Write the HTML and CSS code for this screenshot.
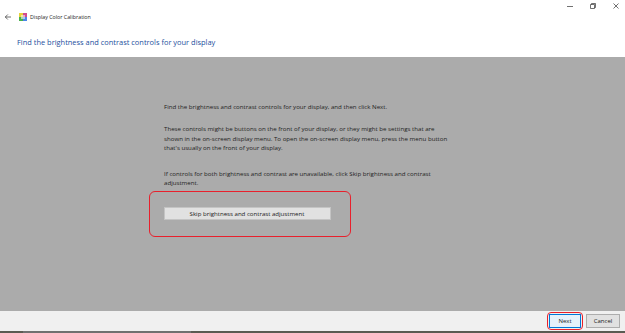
FILE: index.html
```html
<!DOCTYPE html>
<html lang="en">
<head>
    <meta charset="UTF-8">
    <title>Display Color Calibration</title>
    <link rel="stylesheet" href="styles.css">
</head>
<body>
    <div class="window">
        <div class="titlebar">
            <svg class="back" width="8" height="8" viewBox="0 0 8 8"><path d="M7 4H1.3M3.8 1.5L1.3 4l2.5 2.5" stroke="#333" stroke-width="0.7" fill="none"/></svg>
            <svg class="app-icon" width="8" height="8" viewBox="0 0 8 8">
                <rect x="0" y="0" width="8" height="8" fill="#3a6fc4"/>
                <rect x="0" y="0" width="4" height="4" fill="#e8d23a"/>
                <rect x="4" y="0" width="4" height="4" fill="#d14b8f"/>
                <rect x="0" y="4" width="4" height="4" fill="#48b04c"/>
                <rect x="4" y="4" width="4" height="4" fill="#4a86e8"/>
                <rect x="2" y="2" width="4" height="4" fill="#f4f4f4" opacity="0.6"/>
            </svg>
            <span class="app-title">Display Color Calibration</span>
            <div class="win-controls">
                <svg width="8" height="8" viewBox="0 0 8 8"><path d="M1 4.5h6" stroke="#333" stroke-width="0.7"/></svg>
                <svg width="8" height="8" viewBox="0 0 8 8"><path d="M1.5 2.5h4v4h-4z M2.5 2.5v-1h4v4h-1" stroke="#333" stroke-width="0.7" fill="none"/></svg>
                <svg width="8" height="8" viewBox="0 0 8 8"><path d="M1.5 1.5l5 5M6.5 1.5l-5 5" stroke="#333" stroke-width="0.7"/></svg>
            </div>
        </div>
        <div class="header">
            <h1>Find the brightness and contrast controls for your display</h1>
        </div>
        <div class="main">
            <div class="content">
                <p class="first">Find the brightness and contrast controls for your display, and then click Next.</p>
                <p>These controls might be buttons on the front of your display, or they might be settings that are<br>shown in the on-screen display menu. To open the on-screen display menu, press the menu button that's usually on the front of your display.</p>
                <p class="skip-note">If controls for both brightness and contrast are unavailable, click Skip brightness and contrast adjustment.</p>
                <div class="highlight">
                    <button class="btn-skip">Skip brightness and contrast adjustment</button>
                </div>
            </div>
        </div>
        <div class="footer">
            <span class="highlight-small"><button class="btn btn-next">Next</button></span>
            <button class="btn">Cancel</button>
        </div>
        <div class="taskbar"><span class="taskbar-item"></span></div>
    </div>
</body>
</html>
```

FILE: styles.css
```css
body {
    margin: 0;
    font-family: "Open Sans", "Noto Sans", sans-serif;
    background: #fff;
}

.window {
    width: 625px;
    height: 333px;
    display: flex;
    flex-direction: column;
    overflow: hidden;
}

.titlebar {
    height: 34px;
    display: flex;
    align-items: center;
    padding-left: 4px;
    color: #222;
    position: relative;
}

.back {
    margin-right: 7px;
}

.app-icon {
    margin-right: 3px;
}

.app-title {
    font-size: 5.3px;
}

.win-controls {
    position: absolute;
    top: 2px;
    right: 5px;
    display: flex;
    gap: 15px;
}

.header {
    height: 23px;
    padding-left: 17px;
}

h1 {
    margin: 0;
    margin-top: 3px;
    font-size: 7.45px;
    font-weight: normal;
    color: #1d4f9e;
}

.main {
    flex: 1;
    background: #ababab;
    padding-top: 45px;
    padding-left: 164px;
}

.content {
    width: 291px;
    font-size: 6.15px;
    line-height: 9.3px;
    color: #1e1e1e;
}

.content p {
    margin: 0 0 13px 0;
}

.content p.skip-note {
    margin-top: 17px;
    margin-bottom: 0;
}

.highlight {
    margin-left: -15px;
    margin-top: 3px;
    width: 202px;
    height: 46px;
    border: 1.5px solid #e8202c;
    border-radius: 6px;
    display: flex;
    align-items: center;
    padding-left: 13.5px;
    box-sizing: border-box;
}

.btn-skip {
    width: 167px;
    height: 13px;
    padding: 0;
    font-family: inherit;
    font-size: 6.1px;
    color: #1a1a1a;
    background: #e1e1e1;
    border: 1px solid #c4c4c4;
}

.footer {
    height: 20px;
    background: #f0f0f0;
    display: flex;
    justify-content: flex-end;
    align-items: center;
    padding-right: 5px;
    gap: 3px;
}

.highlight-small {
    display: flex;
    padding: 1px;
    border: 1.5px solid #e8202c;
    border-radius: 4px;
}

.btn {
    width: 34px;
    height: 14px;
    padding: 0;
    font-family: inherit;
    font-size: 6px;
    color: #1a1a1a;
    background: #e1e1e1;
    border: 1px solid #adadad;
}

.btn-next {
    width: 32px;
    background: #e5f1fb;
    border-color: #0078d7;
}

.taskbar {
    height: 2px;
    background: #5b5b52;
    padding-left: 23px;
}

.taskbar-item {
    display: block;
    width: 168px;
    height: 2px;
    background: #707070;
}
```
